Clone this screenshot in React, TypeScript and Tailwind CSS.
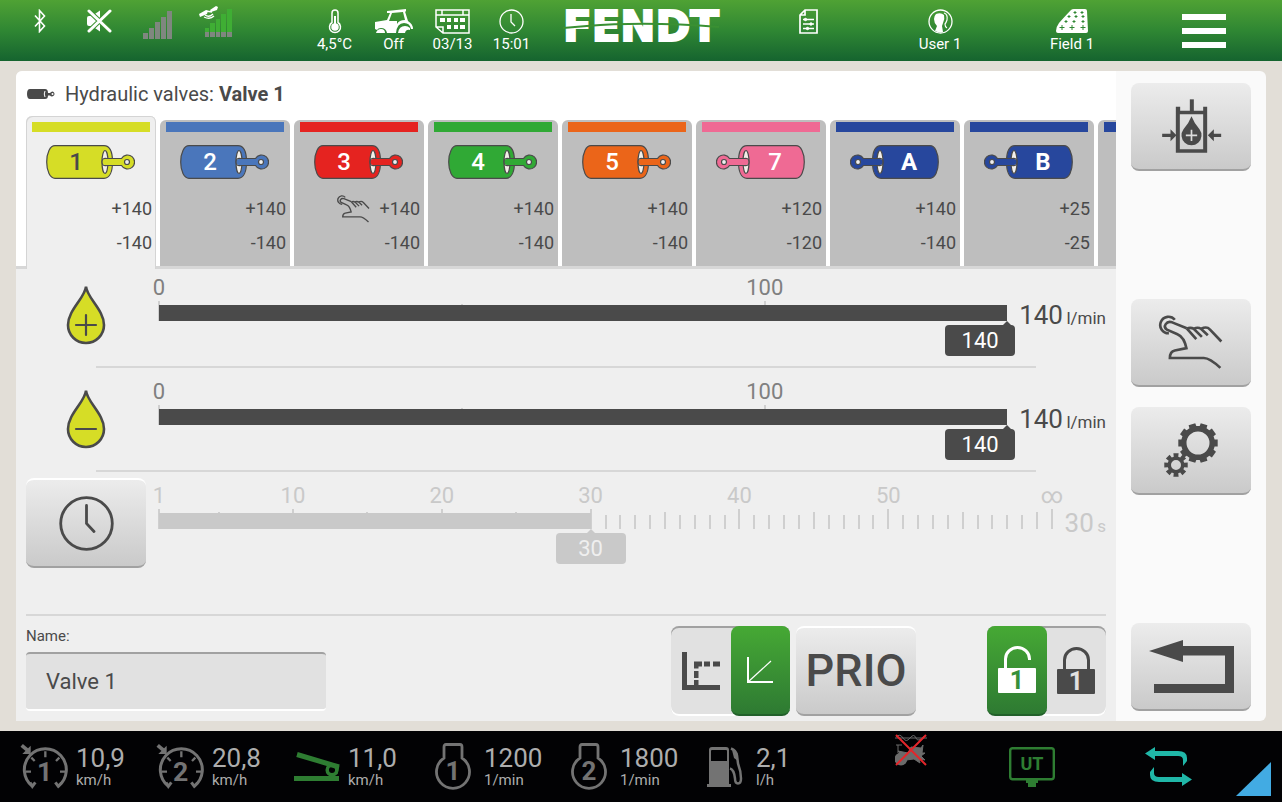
import React, { useState } from 'react';
import clsx from 'clsx';

const DARK = '#4a4a4a';

/* ---------- status bar icons ---------- */

const BluetoothIcon = () => (
    <svg width="12" height="24" viewBox="0 0 12 24" fill="none" stroke="white" strokeWidth="1.6">
        <path d="M1 6.5 10.500 17 5.500 22.500V1.500L10.500 7 1 17.500" />
    </svg>
);

const MuteIcon = () => (
    <svg width="26" height="24" viewBox="0 0 26 24">
        <path d="M1 9q0-2 2-2h3l8-5.500v21L6 17H3q-2 0-2-2z" fill="white" />
        <path d="M3 2l21 20M24 2 3 22" stroke="#3f9434" strokeWidth="5" />
        <path d="M3 2l21 20M24 2 3 22" stroke="white" strokeWidth="3" strokeLinecap="round" />
    </svg>
);

const SignalIcon = () => (
    <svg width="30" height="28" viewBox="0 0 30 28" fill="#7f877f" className="mt-0.5">
        <path d="M0 22h5v6H0zM6 17h5v11H6zM12 11h5v17h-5zM18 6h5v22h-5zM24 0h5v28h-5z" />
    </svg>
);

const SatelliteIcon = () => (
    <svg width="36" height="32" viewBox="0 0 36 32" className="-mt-1">
        <path d="M6 23h4v4H6zM11 18h5v9h-5zM17 14h4v13h-4zM22 9h5v18h-5zM28 4h5v23h-5z" fill="#3fae34" />
        <path d="M6 27h4v5H6zM11 27h5v5h-5zM17 27h4v5h-4zM22 27h5v5h-5zM28 27h5v5h-5z" fill="#7f877f" />
        <path d="M0 9l7-4 2 1-1 3-7 3zM11 5l6-4 2 1-1 3-6 2z" fill="white" />
        <path d="M7 6l6 1M6 10q4 3 8-1M5 12q6 3 10-1" stroke="white" strokeWidth="1.300" fill="none" />
    </svg>
);

const ThermometerIcon = () => (
    <svg width="14" height="25" viewBox="0 0 14 25" fill="none" stroke="white" strokeWidth="1.5">
        <path d="M4 13.500V4a3 3 0 0 1 6 0v9.500a5.500 5.500 0 1 1-6 0z" />
        <circle cx="7" cy="18" r="3" fill="white" />
        <path d="M7 7v10" strokeWidth="2" />
    </svg>
);

const TractorIcon = () => (
    <svg width="40" height="25" viewBox="0 0 40 25">
        <path d="M13 2 32 0V2.500H31L34 12q5 3 5 8h-2q-1-6-7-6-7 0-8 10h-9q-1-5-6-5-3 0-4 2l-2-1v-7l12-2 3-7h-3zM18 4l-3 8h8v3q2-4 8-4L29 3z" fill="white" fillRule="evenodd" />
        <path d="M24 24q1-7 7-7 3 0 5 2v2q-4-1-5 3zM2 24q1-4 5-4t4 4z" fill="white" />
    </svg>
);

const CalendarIcon = () => (
    <svg width="35" height="25" viewBox="0 0 35 25">
        <path d="M1 1h33v23H8l-7-6zM1 6h33M7 1v5M28 1v5M1 18h7v6" fill="none" stroke="white" strokeWidth="1.500" />
        <path d="M5 9h5v4H5zM12 9h4v4h-4zM19 9h4v4h-4zM25 9h5v4h-5zM12 16h4v4h-4zM19 16h4v4h-4zM25 16h5v4h-5z" fill="white" />
    </svg>
);

const SmallClockIcon = () => (
    <svg width="25" height="25" viewBox="0 0 25 25" fill="none" stroke="white" strokeWidth="1.300">
        <circle cx="12.500" cy="12.500" r="11.500" />
        <path d="M12 5v8l4 4" />
    </svg>
);

const DocumentIcon = () => (
    <svg width="19" height="25" viewBox="0 0 19 25" fill="none" stroke="white">
        <path d="M6 1h12v23H1V6zM6 1v5H1" strokeWidth="1.700" />
        <path d="M4 10.500h11M4 15h11M4 19.500h11" strokeWidth="1.300" />
        <g fill="white">
            <circle cx="6.500" cy="10.500" r="1.200" />
            <circle cx="12" cy="15" r="1.200" />
            <circle cx="8.500" cy="19.500" r="1.200" />
        </g>
    </svg>
);

const UserIcon = () => (
    <svg width="25" height="25" viewBox="0 0 25 25">
        <circle cx="12.500" cy="12.500" r="11.500" fill="none" stroke="white" strokeWidth="1.300" />
        <path d="M8 5q5-2 8 1 1 4-1 8l-1 3 1 6q-4 1-8-1l2-5q-3-3-3-7 0-3 2-5z" fill="white" />
        <path d="M16 4q4 1 3 7-1 3-2 4 0 3 2 4" fill="none" stroke="white" strokeWidth="1.200" />
    </svg>
);

const FieldIcon = () => (
    <svg width="33" height="25" viewBox="0 0 33 25">
        <path d="M15 1q1-1 3-1h11q2 0 2 2l1 20q0 2-2 2H2q-2 0-2-2 0-4 3-8Q11 5 15 1z" fill="white" />
        <path
            d="M19 2v3M17.500 3.500h3M26 2v3M24.500 3.500h3M13 6v3M11.500 7.500h3M20 6v3M18.500 7.500h3M27 6v3M25.500 7.500h3M10 11v3M8.500 12.500h3M18 11v3M16.500 12.500h3M27 11v3M25.500 12.500h3M6 16v5M3.500 18.500h5M16 16v5M13.500 18.500h5M27 16v5M24.500 18.500h5"
            stroke="#2f8733"
        />
    </svg>
);

interface StatusItemProps {
    icon: React.ReactNode;
    label?: string;
    wide?: boolean;
}

const StatusItem: React.FC<StatusItemProps> = ({ icon, label, wide }) => (
    <div className={clsx('flex shrink-0 flex-col items-center', wide ? 'w-[132px]' : 'w-[59px]')}>
        <div className="flex h-[34px] items-start pt-[9px]">{icon}</div>
        {label && <span className="text-[15px] leading-5 whitespace-nowrap">{label}</span>}
    </div>
);

const StatusBar = () => (
    <header className="grid h-[61px] shrink-0 grid-cols-[1fr_auto_1fr] bg-linear-to-b from-[#4fa234] via-[#2f8733] to-[#15642f] text-white">
        <div className="flex pl-2.5">
            <StatusItem icon={<BluetoothIcon />} />
            <StatusItem icon={<MuteIcon />} />
            <StatusItem icon={<SignalIcon />} />
            <StatusItem icon={<SatelliteIcon />} />
            <div className="w-[59px]" />
            <StatusItem icon={<ThermometerIcon />} label="4,5°C" />
            <StatusItem icon={<TractorIcon />} label="Off" />
            <StatusItem icon={<CalendarIcon />} label="03/13" />
            <StatusItem icon={<SmallClockIcon />} label="15:01" />
        </div>
        <div className="relative flex justify-center">
            <span className="font-['DejaVu_Sans'] text-[42px] leading-[54px] font-bold [-webkit-text-stroke:2px_white]">FENDT</span>
            <svg viewBox="0 0 170 10" preserveAspectRatio="none" className="absolute top-5 left-0 h-2.5 w-full">
                <path d="M0 8 26 6Q90 1 170 7" fill="none" stroke="#3a9033" strokeWidth="1.800" />
            </svg>
        </div>
        <div className="flex justify-end pr-3">
            <StatusItem wide icon={<DocumentIcon />} />
            <StatusItem wide icon={<UserIcon />} label="User 1" />
            <StatusItem wide icon={<FieldIcon />} label="Field 1" />
            <button aria-label="Menu" className="flex w-[132px] flex-col items-center gap-2 pt-3.5">
                <span className="h-1.5 w-11 bg-white" />
                <span className="h-1.5 w-11 bg-white" />
                <span className="h-1.5 w-11 bg-white" />
            </button>
        </div>
    </header>
);

/* ---------- panel icons ---------- */

const HandIcon: React.FC<{ className?: string }> = ({ className }) => (
    <svg viewBox="953 130 200 166" className={className} fill="none" stroke={DARK} strokeWidth="8">
        <path d="M1004 144A25 25 0 1 0 986 185" />
        <path d="M1040 170 996 152C978 146 967 165 980 174L1012 188C1030 195 1035 212 1039 230L1004 237Q989 240 989 260H1092Q1110 260 1142 290" />
        <path d="M1040 170 1069 203M1040 171Q1052 166 1062 172L1086 196M1062 171Q1074 165 1084 172L1104 191M1084 171Q1101 163 1110 173L1145 210" />
    </svg>
);

const PressureIcon = () => (
    <svg width="61" height="55" viewBox="840 295 182 165" fill={DARK}>
        <path d="M926 296h12v36h-12z" />
        <path d="M884 318h13v12h69v-12h12v138h-94zM896 341v105h70V341z" fillRule="evenodd" />
        <path d="M931 347Q940 370 955 386A30 30 0 1 1 907 386Q922 370 931 347z" />
        <path d="M931 387v34M914 404h34" stroke="#dcdcdc" strokeWidth="5" />
        <path d="M843 399h25v-13l18 18-18 18v-13h-25zM1020 399h-22v-13l-18 18 18 18v-13h22z" />
    </svg>
);

const gearPath = (cx: number, cy: number, outer: number, root: number, hole: number, teeth: number) => {
    const step = (Math.PI * 2) / teeth;
    const pt = (r: number, a: number) => `${(cx + r * Math.cos(a)).toFixed(2)} ${(cy + r * Math.sin(a)).toFixed(2)}`;
    let d = '';
    for (let i = 0; i < teeth; i++) {
        const a = i * step + (teeth === 10 ? step / 2 : 0) - Math.PI / 2;
        d += `${i ? 'L' : 'M'}${pt(root, a - step * 0.34)}L${pt(outer, a - step * 0.28)}L${pt(outer, a + step * 0.28)}L${pt(root, a + step * 0.34)}`;
    }
    return `${d}ZM${cx - hole} ${cy}a${hole} ${hole} 0 1 0 ${hole * 2} 0a${hole} ${hole} 0 1 0 ${-hole * 2} 0Z`;
};

const GearsIcon = () => (
    <svg width="54" height="54" viewBox="0 0 54 54" fill={DARK} fillRule="evenodd">
        <path d={gearPath(34, 20, 20, 17, 11.5, 10)} />
        <path d={gearPath(12, 42, 12, 8.5, 5, 8)} />
    </svg>
);

const BackIcon = () => (
    <svg width="85" height="53" viewBox="0 0 85 53" fill={DARK}>
        <path d="M0 11 34 0V6H85V53H5V44H76V15.500H34V22Z" />
    </svg>
);

const ClockIcon = () => (
    <svg width="55" height="55" viewBox="0 0 55 55" fill="none" stroke={DARK} strokeWidth="2.800" strokeLinecap="round">
        <circle cx="27.500" cy="27.500" r="25.800" />
        <path d="M27.500 9.500v18l7.500 8" />
    </svg>
);

const DropIcon: React.FC<{ sign: string }> = ({ sign }) => (
    <svg width="40" height="60" viewBox="0 1 40 60" stroke={DARK} strokeWidth="2.600" strokeLinecap="round">
        <path d="M20 2.500C21 14 38 26 38 41A18 18 0 0 1 2 41C2 26 19 14 20 2.500Z" fill="#d6dd26" />
        <path d={sign === '+' ? 'M10 41h20M20 31v20' : 'M10 41h20'} strokeWidth="2.200" />
    </svg>
);

const StepCurveIcon = () => (
    <svg width="38" height="38" viewBox="0 0 38 38" fill={DARK}>
        <path d="M0 0h5v33h33v5H0z" />
        <path d="M12 9.500h8v5h-3.500v2H12zM22 9.500h6v5h-6zM31 9.500h7v5h-7zM12 19h4.500v7H12zM12 28h4.500v6H12z" />
    </svg>
);

const LinearCurveIcon = () => (
    <svg width="26" height="26" viewBox="0 0 26 26" fill="none" stroke="white">
        <path d="M1 0v25h25" strokeWidth="2" />
        <path d="M1 25 24 4" strokeWidth="1.200" />
    </svg>
);

const LockIcon: React.FC<{ open?: boolean }> = ({ open }) => (
    <svg width="38" height="56" viewBox="0 -4 38 56" className={open ? 'text-white' : 'text-[#4a4a4a]'}>
        <path
            d={open ? 'M7.500 24V13a12 11.500 0 0 1 24 0v1' : 'M7.500 24V13a12 11.500 0 0 1 24 0v11'}
            fill="none"
            stroke="currentColor"
            strokeWidth="3"
        />
        <rect y="22" width="38" height="25" rx="1" fill="currentColor" />
        <text x="19" y="43" textAnchor="middle" fontSize="25" fontWeight="700" fill={open ? '#37903a' : '#e1e1e1'}>
            1
        </text>
    </svg>
);

/* ---------- valve tabs ---------- */

interface Valve {
    id: string;
    color: string;
    plus: string;
    minus: string;
    flipped?: boolean;
    manual?: boolean;
}

const VALVES: Valve[] = [
    { id: '1', color: '#d6dd26', plus: '+140', minus: '-140' },
    { id: '2', color: '#4a76bb', plus: '+140', minus: '-140' },
    { id: '3', color: '#e52320', plus: '+140', minus: '-140', manual: true },
    { id: '4', color: '#30a935', plus: '+140', minus: '-140' },
    { id: '5', color: '#eb6519', plus: '+140', minus: '-140' },
    { id: '7', color: '#ef6a94', plus: '+120', minus: '-120', flipped: true },
    { id: 'A', color: '#27479d', plus: '+140', minus: '-140', flipped: true },
    { id: 'B', color: '#27479d', plus: '+25', minus: '-25', flipped: true },
    { id: '', color: '#27479d', plus: '', minus: '' },
];

const CylinderIcon: React.FC<{ valve: Valve; dark: boolean }> = ({ valve, dark }) => (
    <span className="relative block h-[34px] w-[89px]">
        <svg width="89" height="34" viewBox="0 0 89 34" className={valve.flipped ? '-scale-x-100' : ''} fill={valve.color} stroke={DARK} strokeWidth="1.200">
            <path d="M9 .700H58C64 .700 66.500 8 66.500 17S64 33.300 58 33.300H9C4 33.300 .700 26 .700 17S4 .700 9 .700Z" />
            <ellipse cx="59" cy="17" rx="3" ry="11.500" fill="#f3efe9" />
            <path d="M65 13.500h10.500a7 7 0 1 1 0 7H65" />
            <path d="M66 14.100h-7q-3 0-3 2.900t3 2.900h7z" stroke="none" />
            <path d="M61 13.500h5M61 20.500h5M61 13.500q-5-1-5 3.500t5 3.500" fill="none" />
            <circle cx="81" cy="17" r="2.500" fill="#efefef" />
        </svg>
        <span
            className={clsx(
                'absolute inset-y-0 w-[60px] text-center text-2xl leading-[34px]',
                valve.flipped ? 'right-0' : 'left-0',
                dark ? 'text-[#4a4a4a]' : 'text-white',
                /[A-Z]/.test(valve.id) ? 'font-bold' : 'font-medium',
            )}
        >
            {valve.id}
        </span>
    </span>
);

const ValveTab: React.FC<{ valve: Valve; active: boolean; onSelect: () => void }> = ({ valve, active, onSelect }) => (
    <button
        role="tab"
        aria-selected={active}
        aria-label={`Valve ${valve.id}`}
        onClick={onSelect}
        className={clsx(
            'flex w-[130px] shrink-0 flex-col rounded-t-md px-1 text-lg leading-[34px]',
            active ? 'bg-[#efefef] pt-1.5 shadow-[inset_1px_1px_0_#d4d4d4,inset_-1px_0_0_#d4d4d4]' : 'mt-1 mb-[3px] bg-[#bebebe] pt-0.5',
        )}
    >
        <span className="mx-0.5 h-2.5 self-stretch" style={{ background: valve.color }} />
        <span className="mt-[13px] ml-4 h-[34px]">{valve.id && <CylinderIcon valve={valve} dark={valve.id === '1'} />}</span>
        <span className="mt-[13px] flex h-[34px] items-center justify-end gap-2 self-stretch">
            {valve.manual && <HandIcon className="h-7 w-[35px]" />}
            {valve.plus}
        </span>
        <span className="self-end">{valve.minus}</span>
    </button>
);

/* ---------- sliders ---------- */

interface ScaleProps {
    name: string;
    min: number;
    max: number;
    value: number;
    unit: string;
    labels: [number, string][];
    ticks: [number, 'major' | 'mid' | 'minor'][];
    disabled?: boolean;
    onChange: (v: number) => void;
}

const TICK_HEIGHT = { major: 'h-5', mid: 'h-[17px]', minor: 'h-3.5' };

const Scale: React.FC<ScaleProps> = ({ name, min, max, value, unit, labels, ticks, disabled, onChange }) => {
    const pct = (v: number) => ((v - min) / (max - min)) * 100;
    const fill = disabled ? '#c9c9c9' : DARK;

    return (
        <div className="flex min-w-0 flex-1 gap-3">
            <div className="relative min-w-0 flex-1">
                <div className={clsx('h-9 text-[22px] leading-[38px]', disabled ? 'text-[#c9c9c9]' : 'text-[#808080]')}>
                    {labels.map(([at, text]) => (
                        <span key={text} className="absolute top-0 -translate-x-1/2" style={{ left: `${pct(at)}%` }}>
                            {text}
                        </span>
                    ))}
                </div>
                <div className="absolute inset-x-0 top-8 h-5">
                    {ticks.map(([at, kind]) => (
                        <span
                            key={at}
                            className={clsx('absolute bottom-0 w-0.5 -translate-x-1/2 bg-[#cfcfcf]', TICK_HEIGHT[kind])}
                            style={{ left: `${pct(at)}%` }}
                        />
                    ))}
                </div>
                <input
                    type="range"
                    aria-label={name}
                    min={min}
                    max={max}
                    value={value}
                    disabled={disabled}
                    onChange={(e) => onChange(Number(e.target.value))}
                    className="relative block h-4 w-full appearance-none [&::-webkit-slider-thumb]:h-4 [&::-webkit-slider-thumb]:w-0 [&::-webkit-slider-thumb]:appearance-none"
                    style={{ background: `linear-gradient(to right, ${fill} ${pct(value)}%, transparent ${pct(value)}%)` }}
                />
                <svg width="12" height="6" viewBox="0 0 12 6" className="absolute top-[52px] -translate-x-1/2" style={{ left: `${pct(value)}%` }}>
                    <path d="M6 0 12 6H0z" fill={fill} />
                </svg>
                <output
                    className={clsx(
                        'absolute top-14 h-[31px] w-[70px] rounded-sm text-center text-[22px] leading-[31px]',
                        disabled ? 'bg-[#c9c9c9] text-[#efefef]' : 'bg-[#4a4a4a] text-white',
                    )}
                    style={{ left: `min(calc(${pct(value)}% - 35px), calc(100% - 62px))` }}
                >
                    {value}
                </output>
            </div>
            <div className={clsx('shrink-0 pt-7 text-right text-[26px] leading-9 whitespace-nowrap', disabled ? 'min-w-[42px] text-[#c9c9c9]' : 'min-w-[86px]')}>
                {value} <span className="-ml-[3px] text-[17px]">{unit}</span>
            </div>
        </div>
    );
};

const FLOW_LABELS: [number, string][] = [[0, '0'], [100, '100']];
const FLOW_TICKS: ScaleProps['ticks'] = [[0, 'major'], [50, 'mid'], [100, 'major']];

const TIME_LABELS: [number, string][] = [[1, '1'], [10, '10'], [20, '20'], [30, '30'], [40, '40'], [50, '50'], [61, '∞']];
const TIME_TICKS: ScaleProps['ticks'] = Array.from({ length: 61 }, (_, i) => {
    const at = i + 1;
    if (at === 1 || at === 61 || (at % 10 === 0 && at < 60)) return [at, 'major'];
    return [at, at % 5 === 0 ? 'mid' : 'minor'];
});

const SliderRow: React.FC<{ lead: React.ReactNode; children: React.ReactNode }> = ({ lead, children }) => (
    <div className="flex h-[97px] gap-[13px] px-2.5">
        <div className="flex h-[92px] w-[120px] shrink-0 items-center justify-center">{lead}</div>
        {children}
    </div>
);

const Divider = () => <hr className="mr-20 mb-[5px] ml-20 border-0 border-t-2 border-[#d7d7d7]" />;

/* ---------- controls ---------- */

const KEY = 'flex w-[120px] items-center justify-center rounded-lg border-b-2 border-b-[#a1a1a1] bg-linear-to-b from-[#ececec] to-[#cacaca]';
const RAISED_KEY = clsx(KEY, 'h-[90px] border-t-2 border-t-white');

interface ToggleProps {
    name: string;
    options: { value: string; label: string; icon: React.ReactNode }[];
    value: string;
    onChange: (v: string) => void;
}

const Toggle: React.FC<ToggleProps> = ({ name, options, value, onChange }) => (
    <div role="radiogroup" aria-label={name} className="flex h-[90px] w-[119px] rounded-lg bg-[#e1e1e1] shadow-[inset_0_2px_0_#a1a1a1,inset_0_-2px_0_#fff]">
        {options.map((o) => (
            <label
                key={o.value}
                className={clsx(
                    'flex flex-1 items-center justify-center',
                    o.value === value && 'rounded-lg border-b-2 border-[#22602a] bg-linear-to-b from-[#46a934] to-[#2e7a32]',
                )}
            >
                <input type="radio" name={name} aria-label={o.label} checked={o.value === value} onChange={() => onChange(o.value)} className="sr-only" />
                {o.icon}
            </label>
        ))}
    </div>
);

/* ---------- footer ---------- */

const GaugeIcon: React.FC<{ n: number }> = ({ n }) => (
    <svg width="50" height="48" viewBox="60 430 150 144" fill="none" stroke="#737373" strokeWidth="9">
        <path d="M90 549l7 11 9-12M97 560A63 63 0 1 1 175 560L166 548M175 560l9-10" strokeWidth="9" />
        <path d="M136 455v18M77 516h16M180 516h16M94 474l10 10M178 474l-10 10" strokeWidth="7" />
        <path d="M65 437 84 453" strokeWidth="11" />
        <path d="M92 438v25H67z" fill="#737373" stroke="none" />
        <text x="134" y="544" textAnchor="middle" fontSize="80" fontWeight="700" fill="#737373" stroke="none">
            {n}
        </text>
    </svg>
);

const PedalIcon = () => (
    <svg width="46" height="30" viewBox="0 0 46 30" fill="none" stroke="#2e7d32">
        <path d="M0 26.500h45" strokeWidth="5" />
        <path d="M3 2.500 45 15" strokeWidth="5" />
        <circle cx="38" cy="18" r="4.800" strokeWidth="3.500" />
        <path d="M44 14l-2 8" strokeWidth="3" />
    </svg>
);

const EngineIcon: React.FC<{ n: number }> = ({ n }) => (
    <svg width="36" height="47" viewBox="0 0 36 47">
        <path d="M9 15V4q0-2.500 2-2.500h14q2 0 2 2.500v11a16.500 16.500 0 1 1-18 0z" fill="none" stroke="#737373" strokeWidth="2.800" />
        <text x="18" y="37" textAnchor="middle" fontSize="26" fontWeight="700" fill="#737373">
            {n}
        </text>
    </svg>
);

const FuelIcon = () => (
    <svg width="36" height="40" viewBox="0 0 36 40">
        <path d="M2 3q0-3 3-3h14q3 0 3 3v34h2v3H0v-3h2zM4 4v10h16V4q0-1-1-1H5Q4 3 4 4z" fill="#737373" fillRule="evenodd" />
        <path d="M24 1.500q5 2 6 7l1 8q3 8 3 15 0 5-3 5t-3-5q-1-9-5-10" fill="none" stroke="#737373" strokeWidth="2.500" />
        <path d="M25 3l6 4v7l-4-3z" fill="#737373" />
    </svg>
);

const ImplementOffIcon = () => (
    <svg width="32" height="32" viewBox="0 0 32 32">
        <path d="M0 4h32M1 3q4-4 7 1t7 0 6 0 8-2" fill="none" stroke="#6b6b6b" />
        <circle cx="6" cy="25" r="6.500" fill="#6b6b6b" />
        <path d="M3 11v8M1 11h6M3 17l10 2 3-6 10 1 2-3-1 8 3 0-4 3 4 4-6-1 1 4-6-4-8 1-5-6z" fill="#6b6b6b" stroke="#6b6b6b" />
        <path d="M1 1l30 30M31 1 1 31" stroke="#e3262b" strokeWidth="2" />
    </svg>
);

const TerminalIcon = () => (
    <svg width="46" height="40" viewBox="0 0 46 40">
        <rect x="1.200" y="1.200" width="43.600" height="31" rx="2.500" fill="none" stroke="#2e7d32" strokeWidth="2.400" />
        <path d="M17 33h12v3h-2v4h-8v-4h-2z" fill="#2e7d32" />
        <text x="23" y="23" textAnchor="middle" fontSize="18" fontWeight="700" fill="#2e7d32">
            UT
        </text>
    </svg>
);

const SwapIcon = () => (
    <svg width="47" height="39" viewBox="0 0 47 39" fill="#20b7a8">
        <path d="M0 6.500 10 0v4h23q9 0 9 7v3l-4 5v-6q0-4-5-4H10v4z" />
        <path d="M47 32.500 37 39v-4H14q-9 0-9-7v-3l4-5v6q0 4 5 4h23v-4z" />
    </svg>
);

const READINGS = [
    { icon: <GaugeIcon n={1} />, value: '10,9', unit: 'km/h' },
    { icon: <GaugeIcon n={2} />, value: '20,8', unit: 'km/h' },
    { icon: <PedalIcon />, value: '11,0', unit: 'km/h' },
    { icon: <EngineIcon n={1} />, value: '1200', unit: '1/min' },
    { icon: <EngineIcon n={2} />, value: '1800', unit: '1/min' },
    { icon: <FuelIcon />, value: '2,1', unit: 'l/h' },
];

const Footer = () => (
    <footer className="flex h-[71px] shrink-0 items-center bg-[#020204] pr-[11px] pl-5 text-[#adadad]">
        {READINGS.map((r, i) => (
            <div key={i} className="flex w-[136px] items-center gap-1.5">
                <div className="flex w-[50px] shrink-0 justify-center">{r.icon}</div>
                <div className="flex flex-col pt-0.5">
                    <span className="text-[26px] leading-6">{r.value}</span>
                    <span className="text-[15px] leading-5">{r.unit}</span>
                </div>
            </div>
        ))}
        <div className="ml-auto flex h-full items-center">
            <div className="mr-[82px] self-start pt-[3px]">
                <ImplementOffIcon />
            </div>
            <button aria-label="Universal terminal" className="mr-[90px]">
                <TerminalIcon />
            </button>
            <button aria-label="Switch view" className="mr-11">
                <SwapIcon />
            </button>
            <svg width="35" height="34" viewBox="0 0 35 34" className="mb-1.5 self-end">
                <path d="M35 0v34H0z" fill="#42abe3" />
            </svg>
        </div>
    </footer>
);

/* ---------- page ---------- */

const App: React.FC = () => {
    const [selected, setSelected] = useState('1');
    const [name, setName] = useState('Valve 1');
    const [flowOut, setFlowOut] = useState(140);
    const [flowIn, setFlowIn] = useState(140);
    const [time, setTime] = useState(30);
    const [curve, setCurve] = useState('linear');
    const [lock, setLock] = useState('open');

    return (
        <div className="flex min-h-screen flex-col bg-[#e2ded7] font-[Roboto,'Liberation_Sans',sans-serif] text-[#4a4a4a]">
            <StatusBar />

            <main className="flex flex-1 px-4 py-2.5">
                <section className="flex min-w-0 flex-1 flex-col rounded-tl-md bg-[#efefef]">
                    <h1 className="flex h-[45px] items-center gap-2.5 rounded-tl-md bg-white pl-[11px] text-xl">
                        <svg width="28" height="10" viewBox="0 0 28 10" fill={DARK}>
                            <path d="M3 0h15q3 0 3 4h2q1-1.500 2.500-1.500a2.500 2.500 0 1 1-2.500 4h-2q0 3.500-3 3.500H3Q0 10 0 5t3-5z" />
                            <circle cx="25.500" cy="5" r="1" fill="white" />
                            <path d="M18 2q-1.500 3 0 6" stroke="white" fill="none" />
                        </svg>
                        <span>
                            Hydraulic valves: <b>{name}</b>
                        </span>
                    </h1>

                    <div role="tablist" className="flex h-[153px] gap-1 overflow-hidden bg-[linear-gradient(to_top,#d7d7d7_3px,#fff_3px)] pl-2.5">
                        {VALVES.map((v) => (
                            <ValveTab key={v.id} valve={v} active={v.id === selected} onSelect={() => setSelected(v.id)} />
                        ))}
                    </div>

                    <SliderRow lead={<DropIcon sign="+" />}>
                        <Scale name="Flow plus" min={0} max={140} value={flowOut} unit="l/min" labels={FLOW_LABELS} ticks={FLOW_TICKS} onChange={setFlowOut} />
                    </SliderRow>
                    <Divider />
                    <SliderRow lead={<DropIcon sign="-" />}>
                        <Scale name="Flow minus" min={0} max={140} value={flowIn} unit="l/min" labels={FLOW_LABELS} ticks={FLOW_TICKS} onChange={setFlowIn} />
                    </SliderRow>
                    <Divider />
                    <SliderRow
                        lead={
                            <button aria-label="Timer" className={RAISED_KEY}>
                                <ClockIcon />
                            </button>
                        }
                    >
                        <Scale name="Time" min={1} max={61} value={time} unit="s" labels={TIME_LABELS} ticks={TIME_TICKS} disabled onChange={setTime} />
                    </SliderRow>

                    <div className="mx-2.5 mt-auto mb-[5px] flex items-end border-t-2 border-[#d7d7d7] pt-2.5">
                        <div className="mb-[5px] flex flex-col">
                            <label htmlFor="valve-name" className="mb-1.5 text-[15px] leading-5">
                                Name:
                            </label>
                            <input
                                id="valve-name"
                                value={name}
                                onChange={(e) => setName(e.target.value)}
                                className="h-[59px] w-[300px] rounded-sm border-t-2 border-b-2 border-t-[#a1a1a1] border-b-white bg-[#e1e1e1] px-5 text-[22px]"
                            />
                        </div>
                        <div className="ml-auto flex gap-1.5">
                            <Toggle
                                name="Curve"
                                value={curve}
                                onChange={setCurve}
                                options={[
                                    { value: 'step', label: 'Stepped', icon: <StepCurveIcon /> },
                                    { value: 'linear', label: 'Linear', icon: <LinearCurveIcon /> },
                                ]}
                            />
                            <button className={clsx(RAISED_KEY, 'text-[45px] font-medium')}>PRIO</button>
                        </div>
                        <div className="ml-[71px]">
                            <Toggle
                                name="Lock"
                                value={lock}
                                onChange={setLock}
                                options={[
                                    { value: 'open', label: 'Unlocked', icon: <LockIcon open /> },
                                    { value: 'closed', label: 'Locked', icon: <LockIcon /> },
                                ]}
                            />
                        </div>
                    </div>
                </section>

                <aside className="grid w-[150px] shrink-0 grid-rows-[repeat(6,88px)] content-start justify-center gap-y-5 rounded-r-md bg-[#fafafa] pt-3 pb-2.5">
                    <button aria-label="Release pressure" className={clsx(KEY, 'row-start-1')}>
                        <PressureIcon />
                    </button>
                    <button aria-label="Manual operation" className={clsx(KEY, 'row-start-3')}>
                        <HandIcon className="h-[55px] w-[66px]" />
                    </button>
                    <button aria-label="Settings" className={clsx(KEY, 'row-start-4')}>
                        <GearsIcon />
                    </button>
                    <button aria-label="Back" className={clsx(KEY, 'row-start-6')}>
                        <BackIcon />
                    </button>
                </aside>
            </main>

            <Footer />
        </div>
    );
};

export default App;
